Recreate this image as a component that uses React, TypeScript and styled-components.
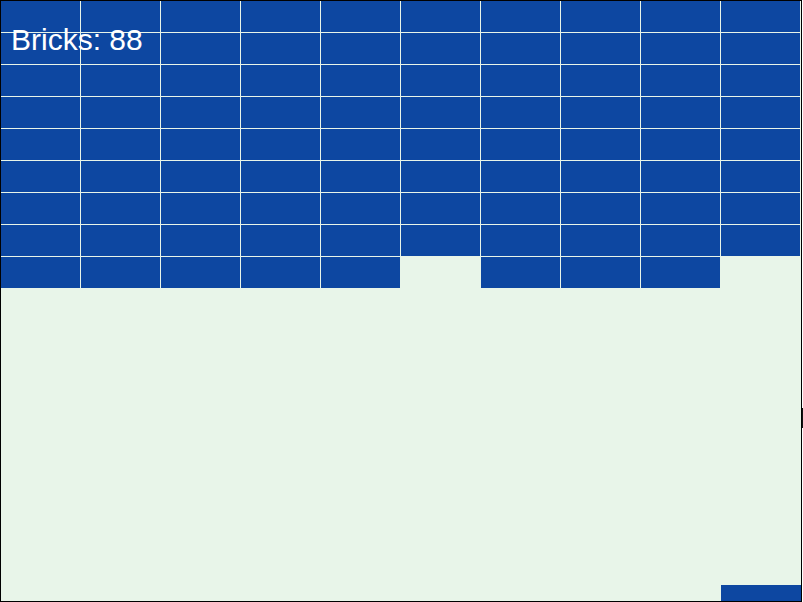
import React from "react";
import styled, { createGlobalStyle } from "styled-components";

const Global = createGlobalStyle`
  html, body { margin: 0; padding: 0; background: #ffffff; }
  body { font-family: "Liberation Sans", Arial, sans-serif; overflow: hidden; }
`;

const Stage = styled.div`
  position: relative;
  width: 803px;
  height: 602px;
`;

const Board = styled.div`
  position: relative;
  width: 800px;
  height: 600px;
  border: 1px solid #000000;
  background: #e8f5e9;
  overflow: hidden;
`;

const BrickGrid = styled.div`
  display: grid;
  grid-template-columns: repeat(10, 80px);
  grid-auto-rows: 32px;
`;

const Brick = styled.div<{ $gone: boolean }>`
  box-sizing: border-box;
  background: ${(p) => (p.$gone ? "transparent" : "#0d47a1")};
  border-right: 1px solid ${(p) => (p.$gone ? "transparent" : "#e8f5e9")};
  border-bottom: 1px solid ${(p) => (p.$gone ? "transparent" : "#e8f5e9")};
`;

const Score = styled.div`
  position: absolute;
  left: 10px;
  top: 22px;
  font-family: "Liberation Sans", Arial, sans-serif;
  font-size: 30px;
  line-height: 34px;
  color: #ffffff;
  white-space: nowrap;
`;

const Paddle = styled.div`
  position: absolute;
  left: 720px;
  top: 584px;
  width: 80px;
  height: 16px;
  background: #0d47a1;
`;

const Ball = styled.div`
  position: absolute;
  left: 802px;
  top: 408px;
  width: 1px;
  height: 20px;
  background: #111111;
`;

const ROWS = 9;
const COLS = 10;
const missing = new Set(["8-5", "8-9"]);

export default function App() {
  const bricks = [];
  for (let r = 0; r < ROWS; r++) {
    for (let c = 0; c < COLS; c++) {
      const key = `${r}-${c}`;
      bricks.push(<Brick key={key} $gone={missing.has(key)} />);
    }
  }
  return (
    <>
      <Global />
      <Stage>
        <Board>
          <BrickGrid>{bricks}</BrickGrid>
          <Score>Bricks: 88</Score>
          <Paddle />
        </Board>
        <Ball />
      </Stage>
    </>
  );
}
